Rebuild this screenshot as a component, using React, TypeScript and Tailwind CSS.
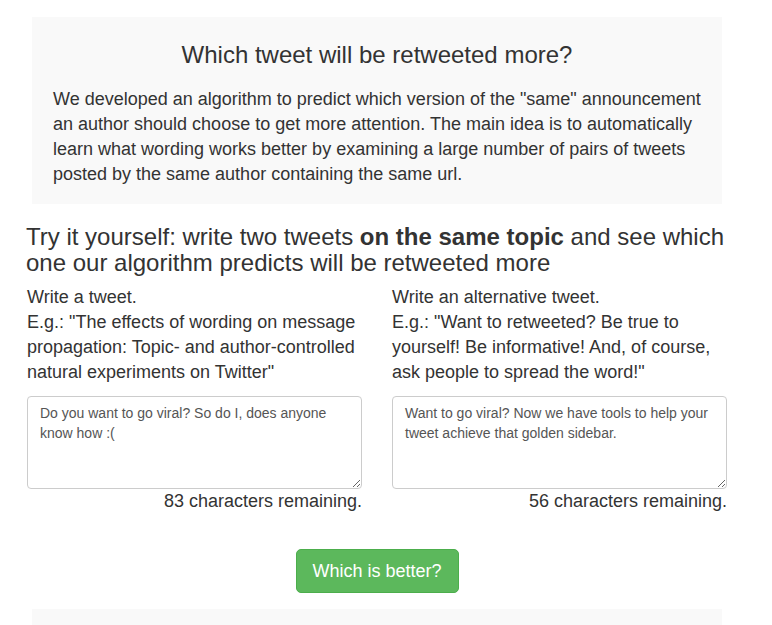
export default function App() {
  return (
    <div
      className="min-h-screen bg-white text-[#333]"
      style={{ fontFamily: '"Liberation Sans", Arial, Helvetica, sans-serif' }}
    >
      <div className="ml-[27px] w-[700px] pt-[17px]">
        <IntroBox />
        <h2 className="mt-[20px] text-[24px] leading-[26px] -ml-[1px]">
          Try it yourself: write two tweets <b>on the same topic</b> and see
          which one our algorithm predicts will be retweeted more
        </h2>
        <div className="mt-[9px] grid grid-cols-2 gap-[30px]">
          <TweetColumn
            title="Write a tweet."
            example={
              'E.g.: "The effects of wording on message propagation: Topic- and author-controlled natural experiments on Twitter"'
            }
            value="Do you want to go viral? So do I, does anyone know how :("
            remaining={83}
          />
          <TweetColumn
            title="Write an alternative tweet."
            example={
              'E.g.: "Want to retweeted? Be true to yourself! Be informative! And, of course, ask people to spread the word!"'
            }
            value="Want to go viral? Now we have tools to help your tweet achieve that golden sidebar."
            remaining={56}
          />
        </div>
        <div className="mt-[35px] flex justify-center">
          <button className="h-[44px] w-[163px] rounded-[5px] border border-[#4cae4c] bg-[#5cb85c] text-[18px] text-white">
            Which is better?
          </button>
        </div>
        <div className="mx-[5px] mt-[16px] h-[40px] bg-[#f9f9f9]" />
      </div>
    </div>
  );
}

function IntroBox() {
  return (
    <div className="mx-[5px] bg-[#f9f9f9] px-[21px] pt-[25px] pb-[17px]">
      <h1 className="text-center text-[24px] leading-[26px]">
        Which tweet will be retweeted more?
      </h1>
      <p className="mt-[19px] text-[18px] leading-[25px]">
        We developed an algorithm to predict which version of the "same"
        announcement an author should choose to get more attention. The main
        idea is to automatically learn what wording works better by examining a
        large number of pairs of tweets posted by the same author containing
        the same url.
      </p>
    </div>
  );
}

function TweetColumn({
  title,
  example,
  value,
  remaining,
}: {
  title: string;
  example: string;
  value: string;
  remaining: number;
}) {
  return (
    <div className="flex flex-col">
      <div className="text-[18px] leading-[25px] pr-[4px]">
        <div>{title}</div>
        <div>{example}</div>
      </div>
      <textarea
        className="mt-[11px] h-[93px] w-[335px] rounded-[4px] border border-[#ccc] px-[12px] pt-[6px] text-[14px] leading-[20px] text-[#555] outline-none"
        defaultValue={value}
        style={{ fontFamily: '"Liberation Sans", Arial, sans-serif' }}
      />
      <div className="w-[335px] text-right text-[18px] leading-[25px]">
        {remaining} characters remaining.
      </div>
    </div>
  );
}
